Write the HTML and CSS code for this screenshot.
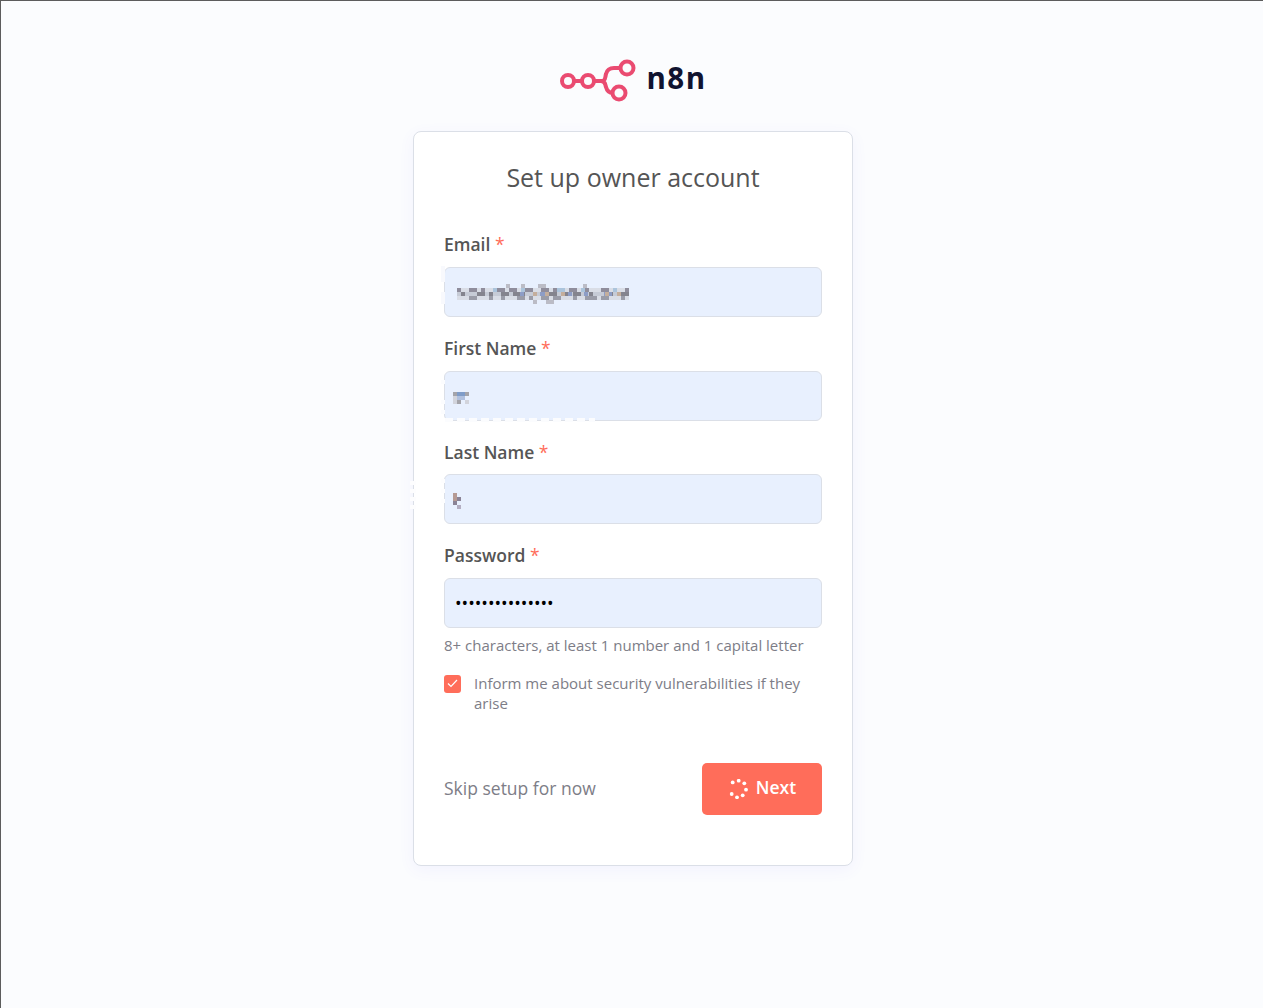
FILE: index.html
```html
<!DOCTYPE html>
<html lang="en">
<head>
  <meta charset="UTF-8" />
  <meta name="viewport" content="width=device-width, initial-scale=1.0"/>
  <title>Set up owner account - n8n</title>
  <link rel="stylesheet" href="styles.css">
</head>
<body>

<div class="page">
  <div class="logo">
    <svg class="logo-mark" width="78" height="44" viewBox="559 59 78 44" fill="none" stroke="#ea4b71" stroke-width="4">
      <circle cx="568" cy="81" r="6"/>
      <circle cx="588" cy="81" r="6"/>
      <circle cx="627" cy="68" r="6.5"/>
      <circle cx="619" cy="93" r="6.5"/>
      <path d="M574 81h8M594 81h7c5 0 4-4 5-7 1-4 4-6 8-6h7M601 81c5 0 4 4 5 6 1 4 4 6 7 6"/>
    </svg>
    <span class="logo-text">n8n</span>
  </div>

  <div class="card">
    <h1>Set up owner account</h1>

    <div class="field">
      <label for="email">Email <span class="req">*</span></label>
      <input id="email" type="text" value="">
      <!-- pixelated address -->
      <svg class="mosaic" style="left:-3px;top:33px" width="192" height="44" viewBox="441 264 192 44" shape-rendering="crispEdges" fill="none" stroke-width="4">
        <path d="M441 270h4M441 278h4M441 296h4M441 300h4" stroke="#f8f9fd" stroke-width="8"/>
        <path d="M457 290h172M457 298h172" stroke="#d9dde6"/>
        <path d="M457 294h172" stroke="#c6cbd6"/>
        <line x1="457" y1="290" x2="629" y2="290" stroke="#8f8d9c" stroke-dasharray="4 8 8 4 4 8 12 4 8 4 12 8 8 4 4 12 8 4 8 12 8 4 4 8"/>
        <line x1="461" y1="294" x2="629" y2="294" stroke="#84848e" stroke-dasharray="4 12 8 4 4 8 8 4 12 8 4 8 12 4 8 4 8 8 4 12 8"/>
        <line x1="469" y1="298" x2="629" y2="298" stroke="#9a9ca8" stroke-dasharray="8 12 4 8 4 12 8 4 4 8 8 4 8 12 4 8 12 4"/>
        <line x1="493" y1="290" x2="629" y2="290" stroke="#abc4dc" stroke-dasharray="4 24 4 32 8 16 4 28"/>
        <line x1="520" y1="294" x2="629" y2="294" stroke="#8d9dc6" stroke-dasharray="4 16 8 20 4 12"/>
        <line x1="533" y1="294" x2="629" y2="294" stroke="#c4ae9c" stroke-dasharray="4 8 4 12 4 40"/>
        <path d="M506 286h4M521 286h4M538 286h8M583 286h4M533 302h4M546 302h8" stroke="#bbbcc6"/>
      </svg>
    </div>

    <div class="field">
      <label for="first">First Name <span class="req">*</span></label>
      <input id="first" type="text" value="">
      <svg class="mosaic" style="left:-3px;top:34px" width="156" height="56" viewBox="441 369 156 56" shape-rendering="crispEdges" fill="none" stroke-width="4">
        <path d="M453 394h4M465 394h4M457 402h4" stroke="#a4a4aa"/>
        <path d="M453 398h4M453 402h4M465 402h4" stroke="#d2d4dc"/>
        <path d="M457 394h8" stroke="#7f9cc8"/>
        <path d="M457 398h8" stroke="#b0c0de"/>
        <path d="M441 382h4M441 402h4M441 412h4M445 420h150" stroke="#fbfcfe" stroke-dasharray="8 4"/>
      </svg>
    </div>

    <div class="field">
      <label for="last">Last Name <span class="req">*</span></label>
      <input id="last" type="text" value="">
      <svg class="mosaic" style="left:-36px;top:35px" width="60" height="48" viewBox="408 473 60 48" shape-rendering="crispEdges" fill="none" stroke-width="4">
        <path d="M410 482h6M410 490h6M410 498h6M410 506h6M441 480h4M441 490h4M441 500h4" stroke="#fdfdfe"/>
        <path d="M453 494h4M453 498h4" stroke="#b59a94"/>
        <path d="M457 498h4M453 502h4" stroke="#8a8396"/>
        <path d="M457 506h4" stroke="#b3aec2"/>
      </svg>
    </div>

    <div class="field">
      <label for="password">Password <span class="req">*</span></label>
      <input id="password" type="password" value="passwordpasswor">
    </div>

    <p class="hint">8+ characters, at least 1 number and 1 capital letter</p>

    <div class="check-row">
      <span class="checkbox">
        <svg width="11" height="9" viewBox="0 0 11 9" fill="none" stroke="#fff" stroke-width="1.2"><path d="M1 4.5 4 7.5 10 1"/></svg>
      </span>
      <span class="check-label">Inform me about security vulnerabilities if they arise</span>
    </div>

    <div class="actions">
      <a class="skip" href="#">Skip setup for now</a>
      <button class="next" type="button">
        <svg width="20" height="20" viewBox="728 779 20 20" fill="#fff">
          <circle cx="732.7" cy="782.4" r="1.9"/>
          <circle cx="738.7" cy="780.7" r="1.9"/>
          <circle cx="744.3" cy="783.3" r="1.9"/>
          <circle cx="746" cy="789.7" r="1.9"/>
          <circle cx="742.7" cy="795.3" r="1.9"/>
          <circle cx="737" cy="797.3" r="1.9"/>
          <circle cx="731.7" cy="794" r="1.9"/>
        </svg>
        <span class="next-text">Next</span>
      </button>
    </div>
  </div>
</div>

</body>
</html>
```

FILE: styles.css
```css
* {
  box-sizing: border-box;
}

html, body {
  margin: 0;
  padding: 0;
}

body {
  font-family: "Open Sans", sans-serif;
  background: #fbfcfe;
  color: #555;
  height: 1008px;
  overflow: hidden;
  border-top: 1px solid #5c5c5c;
  border-left: 1px solid #5c5c5c;
}

.page {
  display: flex;
  flex-direction: column;
  align-items: center;
  padding-left: 2px;
}

.logo {
  display: flex;
  align-items: center;
  height: 44px;
  margin-top: 58px;
  margin-bottom: 28px;
}

.logo-text {
  font-family: "Open Sans", sans-serif;
  font-size: 29.5px;
  line-height: 40px;
  font-weight: 700;
  letter-spacing: 1.5px;
  color: #101330;
  margin-left: 9px;
  padding-bottom: 6px;
}

.card {
  width: 440px;
  height: 735px;
  background: white;
  border: 1px solid #dbdfe7;
  border-radius: 8px;
  box-shadow: 0 4px 16px rgba(99, 77, 255, 0.06);
  padding: 29px 30px 0;
}

h1 {
  margin: 0 0 38.2px;
  text-align: center;
  font-size: 25px;
  line-height: 32px;
  font-weight: 400;
  color: #555;
}

.field {
  position: relative;
  height: 103.67px;
}

label {
  display: block;
  height: 35.9px;
  font-size: 17.5px;
  line-height: 26px;
  font-weight: 600;
  color: #555;
}

.req {
  color: #ff6d5a;
  font-weight: 400;
}

input {
  display: block;
  width: 100%;
  height: 50px;
  padding: 0 10px;
  font-family: inherit;
  font-size: 17.5px;
  color: #000;
  background: #e8f0fe;
  border: 1px solid #dbdfe7;
  border-radius: 6px;
}

.mosaic {
  position: absolute;
}

.hint {
  margin: -12px 0 0;
  font-size: 15px;
  line-height: 22px;
  color: #7d7d87;
}

.check-row {
  display: flex;
  gap: 13px;
  margin-top: 17px;
}

.checkbox {
  flex: none;
  display: flex;
  align-items: center;
  justify-content: center;
  width: 17px;
  height: 18px;
  margin-top: 2px;
  background: #ff6d5a;
  border-radius: 3px;
}

.check-label {
  font-size: 15px;
  line-height: 20px;
  color: #7d7d87;
}

.actions {
  display: flex;
  align-items: center;
  justify-content: space-between;
  margin-top: 50px;
}

.skip {
  font-size: 17.5px;
  color: #7d7d87;
  text-decoration: none;
  padding-bottom: 2px;
}

.next {
  display: flex;
  align-items: center;
  justify-content: center;
  gap: 8px;
  width: 120px;
  height: 52px;
  font-family: inherit;
  font-size: 17.5px;
  font-weight: 600;
  color: white;
  background: #ff6d5a;
  border: none;
  border-radius: 5px;
  cursor: pointer;
}

.next-text {
  padding-bottom: 4px;
}
```
